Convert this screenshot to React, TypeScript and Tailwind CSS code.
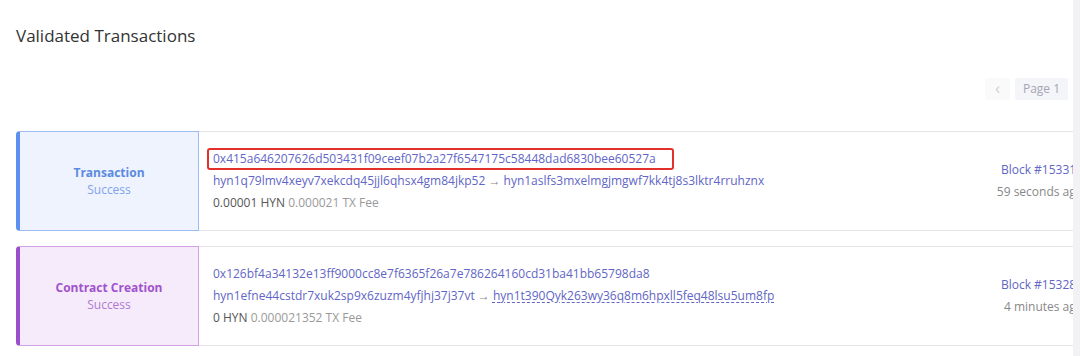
const font = { fontFamily: "'Open Sans', 'Liberation Sans', sans-serif" };

interface TxCardProps {
  kind: string;
  theme: "blue" | "purple";
  hash: string;
  from: string;
  to: string;
  amount: string;
  fee: string;
  block: string;
  age: string;
  marked?: boolean;
  underlineTo?: boolean;
}

const TxCard = ({ kind, theme, hash, from, to, amount, fee, block, age, marked, underlineTo }: TxCardProps) => {
  const tile =
    theme === "blue"
      ? "bg-[#eef3fe] border-[#9dbcf3] border-l-[#5b8ff0] text-[#5b8be0]"
      : "bg-[#f6ebfa] border-[#cfa3e6] border-l-[#9b4ec9] text-[#a053cc]";
  const sub = theme === "blue" ? "text-[#7fa3ec]" : "text-[#b07ad4]";

  return (
    <div className="flex h-[100px] w-[1080px] rounded-[4px] border border-[#e6e6ea] bg-white">
      <div className={`-my-px -ml-px flex w-[183px] shrink-0 flex-col items-center justify-center rounded-l-[4px] border border-l-[4px] text-[12px] leading-[17px] ${tile}`}>
        <span className="font-bold">{kind}</span>
        <span className={sub}>Success</span>
      </div>
      <div className="flex flex-1 flex-col justify-center pl-[14px] text-[12px] leading-[22px]">
        <div className="text-[#6166c6]">
          {marked ? (
            <span className="-ml-[6px] inline-block rounded-[3px] border-2 border-[#e3302b] pl-1 pr-[16px] leading-[18px]">
              {hash}
            </span>
          ) : (
            hash
          )}
        </div>
        <div className="text-[#6166c6]">
          {from} <span className="text-[#888]">→</span>{" "}
          <span className={underlineTo ? "underline decoration-dashed underline-offset-2" : ""}>{to}</span>
        </div>
        <div className="text-[#555]">
          {amount} <span className="text-[#999]">{fee} TX Fee</span>
        </div>
      </div>
      <div className="flex w-[110px] shrink-0 flex-col items-end justify-center pr-[12px] text-[12px] leading-[22px]">
        <span className="text-[#6166c6]">{block}</span>
        <span className="text-[#888]">{age}</span>
      </div>
    </div>
  );
};

export default function App() {
  return (
    <div className="relative h-[356px] w-[1080px] overflow-hidden bg-white" style={font}>
      <div className="w-[1120px] px-4">
        <h1 className="pt-[25px] text-[17px] leading-[22px] text-[#333]">Validated Transactions</h1>
        <div className="mt-[31px] flex h-[22px] justify-end gap-[5px] pr-[6px]">
          <div className="flex w-[25px] items-center justify-center rounded-[2px] bg-[#fafafb] pb-[2px] text-[17px] text-[#cfd0d8]">‹</div>
          <div className="flex w-[53px] items-center justify-center rounded-[2px] bg-[#f4f5f9] text-[12px] text-[#a4a6b4]">Page 1</div>
          <div className="w-[25px] rounded-[2px] bg-[#f4f5f9]" />
        </div>
        <div className="mt-[31px] flex flex-col gap-[15px]">
          <TxCard
            kind="Transaction"
            theme="blue"
            marked
            hash="0x415a646207626d503431f09ceef07b2a27f6547175c58448dad6830bee60527a"
            from="hyn1q79lmv4xeyv7xekcdq45jjl6qhsx4gm84jkp52"
            to="hyn1aslfs3mxelmgjmgwf7kk4tj8s3lktr4rruhznx"
            amount="0.00001 HYN"
            fee="0.000021"
            block="Block #153314"
            age="59 seconds ago"
          />
          <TxCard
            kind="Contract Creation"
            theme="purple"
            underlineTo
            hash="0x126bf4a34132e13ff9000cc8e7f6365f26a7e786264160cd31ba41bb65798da8"
            from="hyn1efne44cstdr7xuk2sp9x6zuzm4yfjhj37j37vt"
            to="hyn1t390Qyk263wy36q8m6hpxll5feq48lsu5um8fp"
            amount="0 HYN"
            fee="0.000021352"
            block="Block #153286"
            age="4 minutes ago"
          />
        </div>
      </div>
      <div className="absolute inset-y-0 right-0 w-[7px] bg-[#f2f2f4]" />
    </div>
  );
}
